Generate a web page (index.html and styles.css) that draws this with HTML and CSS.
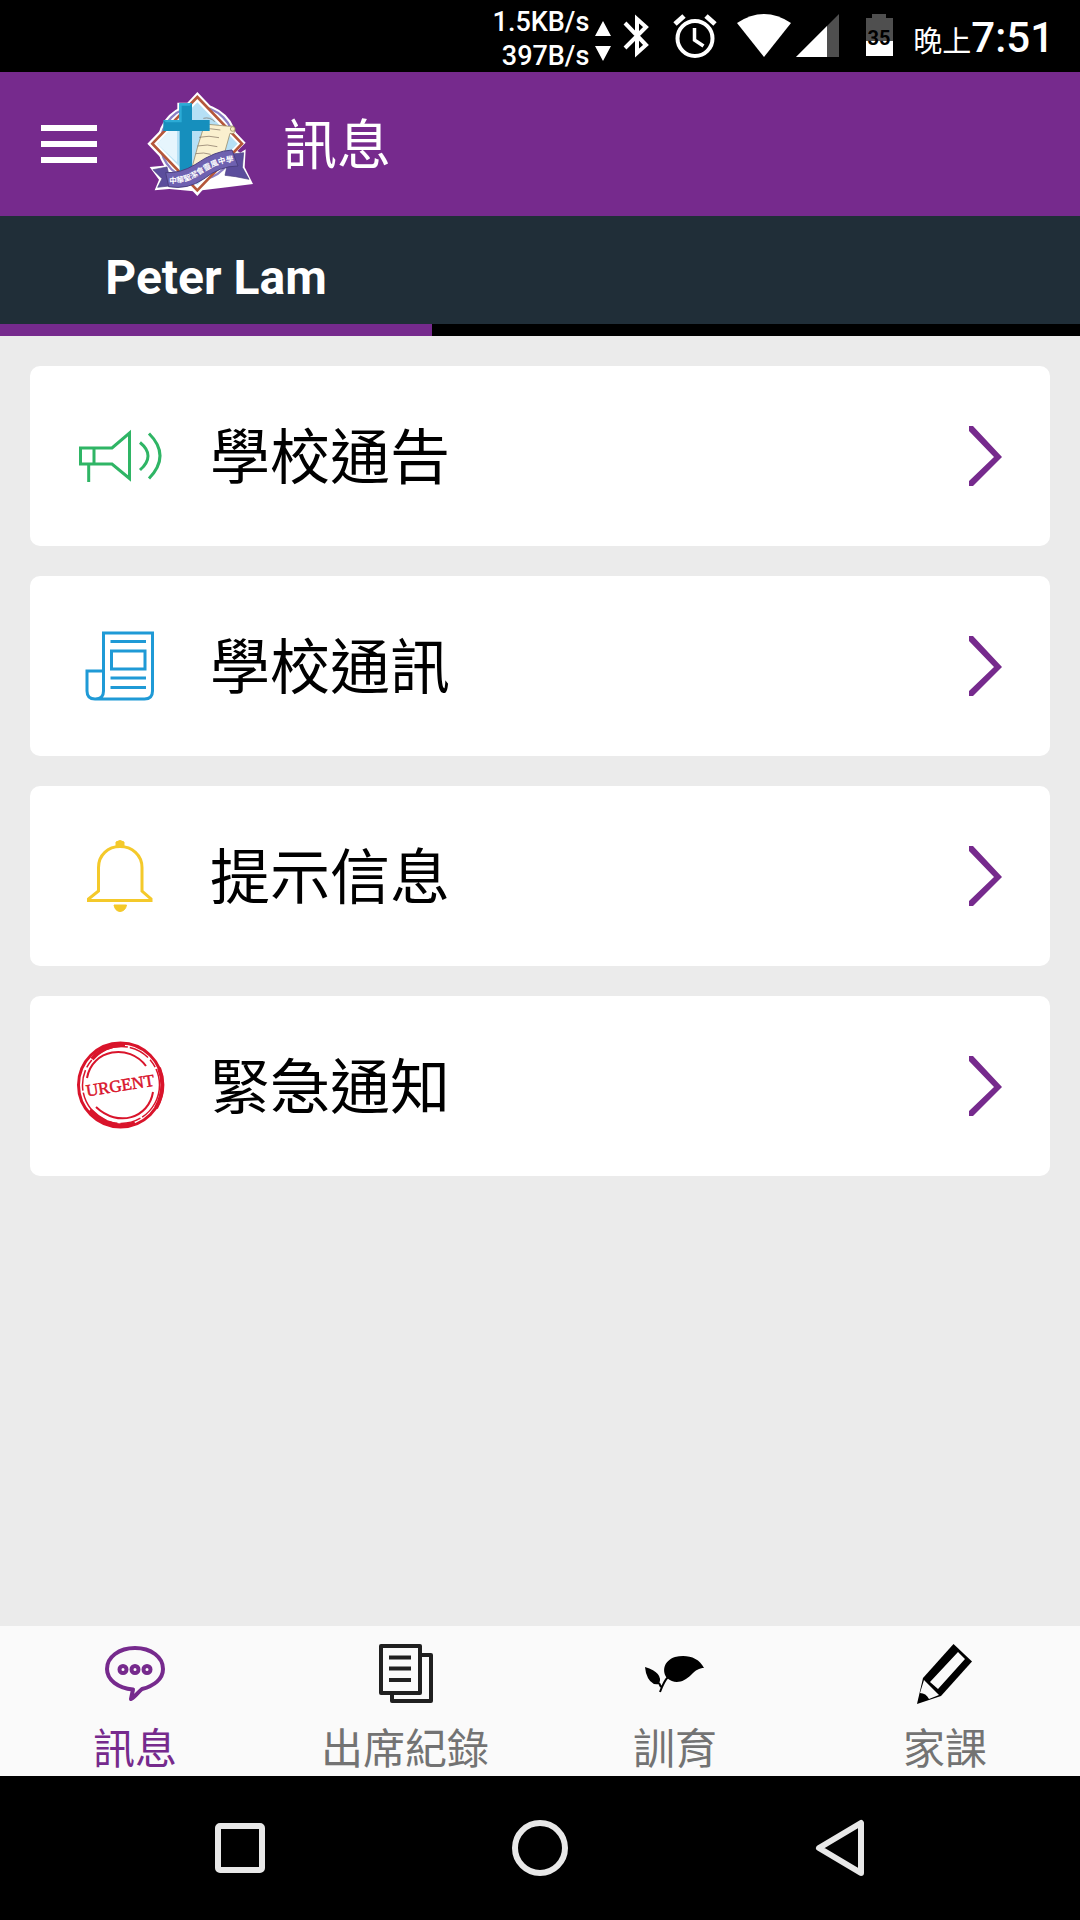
FILE: index.html
```html
<!DOCTYPE html>
<html lang="zh-Hant">
<head>
<meta charset="utf-8">
<meta name="viewport" content="width=device-width, initial-scale=1">
<title>訊息</title>
<link rel="stylesheet" href="styles.css">
</head>
<body>
<div class="status">
  <div class="speed"><span>1.5KB/s</span><span>397B/s</span></div>
  <svg class="arrows" width="16" height="42" viewBox="0 0 16 42" fill="#fff"><path d="M8 1l8 15H0zM8 41L0 26h16z"/></svg>
  <svg class="bluetooth" width="26" height="44" viewBox="0 0 26 44" fill="none" stroke="#fff" stroke-width="4"><path d="M2 9l21 22-9 8V5l9 8L2 34"/></svg>
  <svg class="alarm" width="44" height="44" viewBox="0 0 44 44" fill="none" stroke="#fff" stroke-width="4"><circle cx="22" cy="24.500" r="17.500"/><path d="M2 10l9-8M33 2l9 8" stroke-width="5"/><path d="M21.500 14v12l9 6" stroke-width="3.500"/></svg>
  <svg class="wifi" width="54" height="44" viewBox="0 0 54 44" fill="#fff"><path d="M0 9Q27-9 54 9L27 43z"/></svg>
  <svg class="signal" width="43" height="44" viewBox="0 0 43 44"><path d="M43 0v43H0z" fill="#4f4f4f"/><path d="M31 12v31H0z" fill="#fff"/></svg>
  <svg class="battery" width="27" height="44" viewBox="0 0 27 44"><path d="M6 0h14v4h7v24H0V4h6z" fill="#4f4f4f"/><path d="M0 27h27v15H0z" fill="#fff"/><text x="13" y="31" text-anchor="middle">35</text></svg>
  <div class="clock"><span class="period">晚上</span><span class="time">7:51</span></div>
</div>

<header class="appbar">
  <button class="menu" type="button" aria-label="選單"><span></span><span></span><span></span></button>
  <svg class="crest" width="106" height="104" viewBox="36 21 318 312">
    <g fill="#fff">
      <path d="M187 21l145 152-34 34-111 126L37 176l90-93V53h30z"/>
      <circle cx="187" cy="175" r="120"/>
      <path d="M44 246l56-5 188-54 28 16 16-10-3 54 25 50-78 10-100 12-73-7-44 4 13-32z"/>
    </g>
    <circle cx="187" cy="175" r="110" fill="#fff" stroke="#8b7fc4" stroke-width="7"/>
    <path d="M187 36l134 140-134 140L52 176z" fill="#fff" stroke="#b5573a" stroke-width="8"/>
    <path d="M187 52l121 124-121 124L66 176z" fill="#b6e0f5"/>
    <path d="M66 176l60-62v118z" fill="#e6f5fd"/>
    <path d="M209 117l75 7q18-5 16 13-2 12-15 8l-21 75-92 24q15-60 37-127z" fill="#faf0cf" stroke="#8b7a55" stroke-width="2"/>
    <path d="M205 100q20-5 34 10M196 134q30-6 60 1M192 157q30-7 60 1M187 183q30-7 60 2M182 206q25-5 45 2" fill="none" stroke="#7c6a5a" stroke-width="2"/>
    <circle cx="293" cy="132" r="7" fill="#f5e9bd" stroke="#8b7a55" stroke-width="2"/>
    <path d="M133 55h38v50h53v33h-53v122h-37V138H85v-33h48z" fill="#168fbd"/>
    <path d="M133 55h38l-7 7h-24v50H92l-7-7h48z" fill="#2cabd6"/>
    <path d="M54 254l42-8 14 56-42 5 13-26zM284 208l42-5-4 44 20 36-40-8-32-4z" fill="#5b4d9c" stroke="#4b4081" stroke-width="2"/>
    <path d="M92 263q45 2 88-24 60-42 111-44l18 48q-55 0-103 39-48 33-105 23z" fill="#6e61b0" stroke="#4b4081" stroke-width="3"/>
    <path id="ribbon" d="M103 295q45 2 88-24 60-42 112-41" fill="none"/>
    <text class="ribbon-text"><textPath href="#ribbon">中華聖潔會靈風中學</textPath></text>
  </svg>
  <h1>訊息</h1>
</header>

<div class="students"><button type="button" class="student">Peter Lam</button></div>
<div class="indicator"><span></span></div>

<main class="cards">
  <a class="card" href="#notices">
    <svg class="icon" viewBox="0 0 90 90" fill="none" stroke="#2fb565" stroke-width="3"><path d="M5.500 37H37L54.500 22v45.500L37 53H5.500zM19 37v16M13.700 53v18"/><path d="M65 31.500q16 13 0 27.500M74 22.500q22 22 0 45"/></svg>
    <span>學校通告</span>
    <svg class="chevron" viewBox="0 0 36 60"><path d="M0 0h4l29 31L4 60H0v-5l25-24L0 5z"/></svg>
  </a>
  <a class="card" href="#newsletter">
    <svg class="icon" viewBox="0 0 90 90" fill="none" stroke="#1f9ad6" stroke-width="3"><path d="M28.500 70V12h49V70q0 8-8 8H20q-8 0-8-8V50h16M28.500 70q0 8-8 8M35.500 20.500H71M36.500 30h33.500v18H36.500zM35.500 57H71M35.500 66.500H71"/></svg>
    <span>學校通訊</span>
    <svg class="chevron" viewBox="0 0 36 60"><path d="M0 0h4l29 31L4 60H0v-5l25-24L0 5z"/></svg>
  </a>
  <a class="card" href="#reminders">
    <svg class="icon" viewBox="0 0 90 90" fill="none" stroke="#f4c92a" stroke-width="3"><path d="M23.500 60V36.500C23.500 24 33 15.500 45 15.500S67 24 67 36.500V60l9 8v1.500H13.500V68z"/><path d="M41 15v-4q4-3 8 0v4zM39 74h12.500q-1 6-6.500 6.500-5-.5-6-6.500z" fill="#f4c92a" stroke-width="1"/></svg>
    <span>提示信息</span>
    <svg class="chevron" viewBox="0 0 36 60"><path d="M0 0h4l29 31L4 60H0v-5l25-24L0 5z"/></svg>
  </a>
  <a class="card" href="#urgent">
    <svg class="icon" viewBox="0 0 90 90" fill="none" stroke="#d9142b"><circle cx="45.500" cy="44" r="42" stroke-width="3"/><circle cx="46" cy="44" r="38.500" stroke-width="1.500" stroke-dasharray="38 2 21 3 9 2"/><path d="M84 27q8 20-3 40M15 69q22 22 45 13M17 18Q30 3 50 4" stroke-width="4"/><path d="M12 37C17 8 54 2 71 25M21 66C43 87 74 77 78 51" stroke-width="2"/><text class="stamp" x="45" y="50" text-anchor="middle" transform="rotate(-9 46 44)">URGENT</text></svg>
    <span>緊急通知</span>
    <svg class="chevron" viewBox="0 0 36 60"><path d="M0 0h4l29 31L4 60H0v-5l25-24L0 5z"/></svg>
  </a>
</main>

<nav class="tabs">
  <a class="tab active" href="#messages">
    <svg viewBox="0 0 60 60" fill="none" stroke="#762a8d" stroke-width="4" stroke-linejoin="round"><path d="M28 45.500C13 44 2 36 2 25 2 13 14 4 30 4s28 9 28 21c0 10-9 17-21 20-4 3-7 8-11 10z"/><circle cx="18" cy="25.500" r="3.500"/><circle cx="30" cy="25.500" r="3.500"/><circle cx="42" cy="25.500" r="3.500"/></svg>
    <span>訊息</span>
  </a>
  <a class="tab" href="#attendance">
    <svg viewBox="0 0 60 60" fill="none" stroke="#202020" stroke-width="4" stroke-linejoin="round"><path d="M6 2h39v47H6zM46 11h10v46H17v-7M14 13.500h22M14 24.500h22M14 36h22"/></svg>
    <span>出席紀錄</span>
  </a>
  <a class="tab" href="#conduct">
    <svg viewBox="0 0 60 60"><path d="M0 23q19 6 14 17-9 2-13-11zM59 24C54 13 41 10 30 13 18 17 17 28 22 34c8 7 17 4 24-3 5-5 8-7 13-7z"/><path d="M23 33q-4 4-8 15M14 39l2 4" fill="none" stroke="#000" stroke-width="2"/></svg>
    <span>訓育</span>
  </a>
  <a class="tab" href="#homework">
    <svg viewBox="0 0 60 60"><path d="M38.500 0L57 17.500 26 52 2 60 8 34z"/><path d="M43 8l7 7-27 30-8-7zM9 36l15 15-10 4q-3-6-9-6z" fill="#fafafa"/></svg>
    <span>家課</span>
  </a>
</nav>

<div class="system">
  <button type="button" aria-label="最近使用"><svg viewBox="0 0 60 60"><rect x="8" y="8" width="44" height="44" rx="2"/></svg></button>
  <button type="button" aria-label="主畫面"><svg viewBox="0 0 60 60"><circle cx="30" cy="30" r="25"/></svg></button>
  <button type="button" aria-label="返回"><svg viewBox="0 0 60 60"><path d="M51 5v50L9 30z"/></svg></button>
</div>
</body>
</html>
```
FILE: styles.css
```css
* { box-sizing: border-box; }

body {
  margin: 0;
  min-height: 100vh;
  display: flex;
  flex-direction: column;
  background: #ebebeb;
  color: #000;
  font-family: Roboto, "Noto Sans CJK TC", sans-serif;
}

svg { display: block; flex: none; }
a { color: inherit; text-decoration: none; }
button { padding: 0; border: 0; background: none; color: inherit; font: inherit; }

/* Status bar */
.status {
  display: flex;
  align-items: center;
  justify-content: flex-end;
  height: 72px;
  padding-right: 26px;
  background: #000;
  color: #fff;
}
.speed {
  display: flex;
  flex-direction: column;
  align-items: flex-end;
  font-size: 27px;
  font-weight: 500;
  line-height: 34px;
  padding-top: 6px;
}
.arrows { margin: 10px 12px 0 6px; }
.alarm { margin-left: 24px; }
.wifi { margin-left: 20px; }
.signal { margin-left: 5px; }
.battery { margin: 0 20px 0 27px; }
.battery text { font: 700 20px Roboto, sans-serif; }
.clock {
  display: flex;
  align-items: baseline;
  line-height: 64px;
  padding-top: 8px;
}
.period { font-size: 29px; }
.time { font-size: 42px; font-weight: 500; }

/* App bar */
.appbar {
  display: flex;
  align-items: center;
  height: 144px;
  padding-left: 41px;
  background: #762a8d;
  color: #fff;
}
.menu {
  display: flex;
  flex-direction: column;
  gap: 10px;
  width: 56px;
}
.menu span { height: 6px; background: #fff; }
.crest { margin: 0 30px 0 50px; }
.ribbon-text {
  fill: #fff;
  font: bold 23px "Noto Sans CJK TC", sans-serif;
}
h1 { margin: 0; padding-top: 6px; font-size: 54px; font-weight: 400; line-height: 72px; }

/* Student selector */
.students {
  height: 108px;
  display: flex;
  align-items: center;
  background: #202e38;
  color: #fff;
}
.student {
  width: 40%;
  height: 100%;
  padding-top: 14px;
  font-size: 48px;
  font-weight: 700;
}
.indicator { height: 12px; background: #000; }
.indicator span { display: block; width: 40%; height: 100%; background: #762a8d; }

/* Cards */
.cards {
  flex: 1;
  display: flex;
  flex-direction: column;
  gap: 30px;
  padding: 30px;
}
.card {
  display: flex;
  align-items: center;
  gap: 45px;
  height: 180px;
  padding: 0 45px;
  border-radius: 10px;
  background: #fff;
  font-size: 60px;
  line-height: 90px;
}
.card span { flex: 1; padding-top: 6px; }
.icon { width: 90px; height: 90px; }
.chevron { width: 36px; height: 60px; fill: #762a8d; }
.stamp {
  fill: #d9142b;
  stroke-width: 0.5;
  font: 17px "Liberation Serif", serif;
}

/* Bottom tabs */
.tabs {
  display: grid;
  grid-template-columns: repeat(4, 1fr);
  height: 150px;
  padding-top: 18px;
  background: #fafafa;
}
.tab {
  display: flex;
  flex-direction: column;
  align-items: center;
  gap: 17px;
  color: #737373;
  font-size: 42px;
  line-height: 58px;
}
.tab svg { width: 60px; height: 60px; }
.active { color: #762a8d; }

/* System navigation */
.system {
  display: grid;
  grid-template-columns: repeat(3, 1fr);
  height: 144px;
  padding: 0 90px;
  background: #000;
}
.system button { display: grid; place-items: center; }
.system svg {
  width: 60px;
  height: 60px;
  fill: none;
  stroke: #e8e8e8;
  stroke-width: 6;
  stroke-linejoin: round;
}
```
